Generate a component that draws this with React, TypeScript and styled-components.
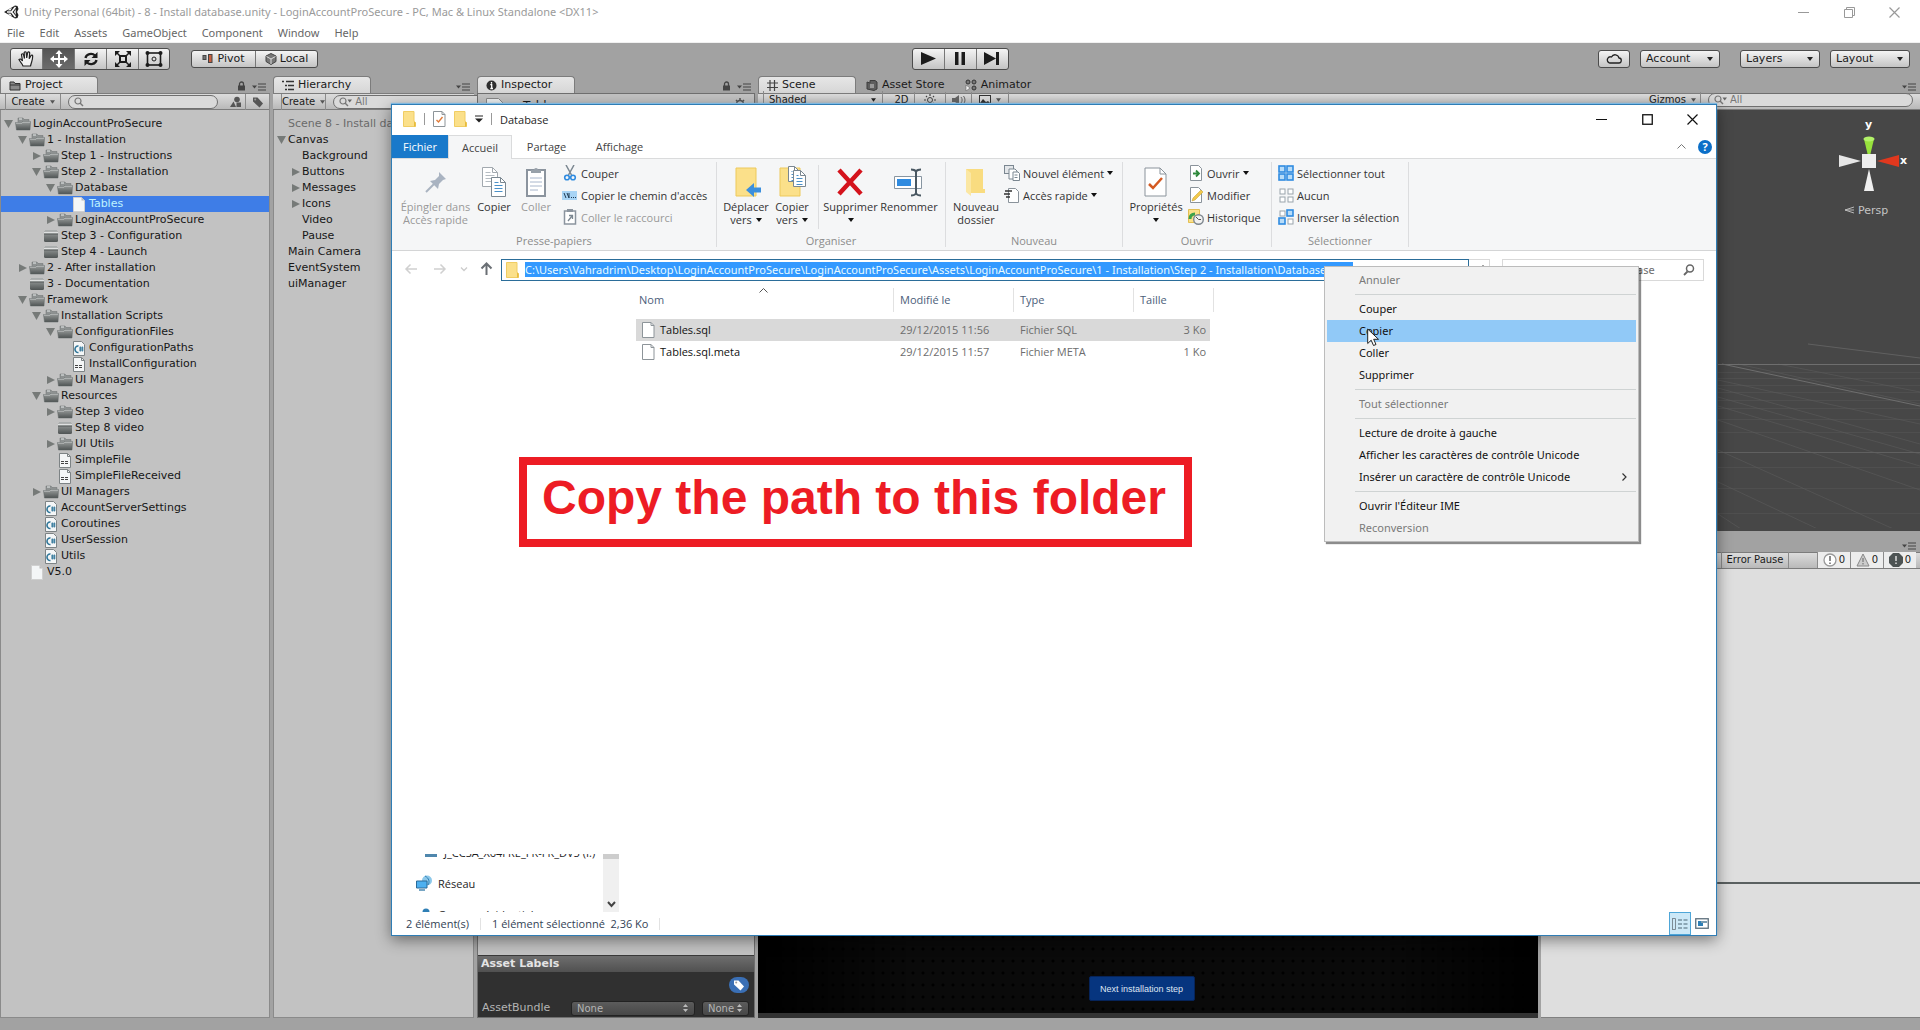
import React from "react";
import styled, { createGlobalStyle, css } from "styled-components";

const unityFont = `"DejaVu Sans", Verdana, sans-serif`;
const winFont = `"Open Sans", "Segoe UI", sans-serif`;
const wideFont = `"Noto Sans", "Segoe UI", sans-serif`;

const GlobalStyle = createGlobalStyle`
  *, *::before, *::after { box-sizing: border-box; }
  body { margin: 0; background: #a2a2a2; }
  button, input, select { font: inherit; color: inherit; margin: 0; }
  ul { list-style: none; margin: 0; padding: 0; }
  svg { display: block; flex: none; }
`;

/* ---------- icons ---------- */

const Caret = ({ size = 6, color = "#222" }: { size?: number; color?: string }) => (
  <svg width={size} height={4} viewBox="0 0 6 4"><path d="M0 0h6L3 4z" fill={color} /></svg>
);

const UnityLogo = () => (
  <svg width="17" height="16" viewBox="0 0 17 16">
    <path d="M1 8 12 1.5l2.5.5L15.500 5 14 8l1.500 3-1 3-2.500.5z" fill="#222" />
    <path d="M4 8h4.500M8.500 8l4-5M8.500 8l4 5" stroke="#fff" strokeWidth="1.600" />
    <path d="M4.500 6.200 9 3.500 7.500 6.500zM4.500 9.800 9 12.500 7.500 9.500zM11 8l1.700-3v6z" fill="#fff" />
  </svg>
);

const LockIcon = () => (
  <svg width="9" height="10" viewBox="0 0 9 10">
    <path d="M2.500 5V3a2 2 0 0 1 4 0v2" fill="none" stroke="#444" strokeWidth="1.300" />
    <rect x="1" y="4.500" width="7" height="5" fill="#444" />
  </svg>
);

const PaneMenuIcon = () => (
  <svg width="14" height="8" viewBox="0 0 14 8">
    <path d="M0 2.500h5L2.500 5.500z" fill="#444" />
    <path d="M6 1h8M6 4h8M6 7h8" stroke="#444" strokeWidth="1.200" />
  </svg>
);

const FolderTabIcon = () => (
  <svg width="12" height="11" viewBox="0 0 12 11">
    <path d="M1 2h4l1 1.500h5V10H1z" fill="#8a8a8a" stroke="#333" />
    <path d="M1 5h10" stroke="#333" />
  </svg>
);

const ListIcon = () => (
  <svg width="12" height="11" viewBox="0 0 12 11">
    <path d="M0 1.500h2M4 1.500h8M3 5.500h2M6 5.500h6M3 9.500h2M6 9.500h6" stroke="#333" strokeWidth="1.400" />
  </svg>
);

const InfoIcon = () => (
  <svg width="11" height="11" viewBox="0 0 11 11">
    <circle cx="5.500" cy="5.500" r="5" fill="#2f2f2f" />
    <path d="M5.500 2v1.700M4.300 4.700h1.400v3.500M4.300 8.500h2.700" stroke="#fff" strokeWidth="1.300" fill="none" />
  </svg>
);

const HashIcon = () => (
  <svg width="11" height="11" viewBox="0 0 11 11">
    <path d="M3 0v11M7.500 0v11M0 3h11M0 7.500h11" stroke="#444" strokeWidth="1.200" />
  </svg>
);

const StoreIcon = () => (
  <svg width="12" height="12" viewBox="0 0 12 12">
    <path d="M1 3l3 1V1.500h5L11 3v7l-3 1.500L1 10z" fill="#5e5e5e" stroke="#3d3d3d" />
    <path d="M4 5h4v4H4z" fill="#999" />
  </svg>
);

const AnimatorIcon = () => (
  <svg width="12" height="12" viewBox="0 0 12 12">
    <g fill="#777" stroke="#333">
      <circle cx="3" cy="3" r="2" /><circle cx="9" cy="3" r="2" /><circle cx="9" cy="9" r="2" />
    </g>
    <path d="M1 6l4 3-4 3z" fill="#eee" stroke="#555" strokeWidth="0.500" />
  </svg>
);

const SearchIcon = ({ caret }: { caret?: boolean }) => (
  <svg width={caret ? 14 : 10} height="10" viewBox={caret ? "0 0 14 10" : "0 0 10 10"}>
    <circle cx="4" cy="4" r="3" fill="none" stroke="#777" strokeWidth="1.200" />
    <path d="M6 6l3 3" stroke="#777" strokeWidth="1.400" />
    {caret && <path d="M8.500 2.500H13L10.700 5.500z" fill="#666" />}
  </svg>
);

const ShapesIcon = () => (
  <svg width="13" height="12" viewBox="0 0 13 12">
    <path d="M1 11l3.500-5.500L7 11z" fill="#555" />
    <circle cx="8" cy="3.500" r="2.800" fill="#555" /><rect x="7.500" y="6.500" width="4.500" height="4.500" fill="#555" />
  </svg>
);

const TagIcon = ({ color = "#555" }: { color?: string }) => (
  <svg width="12" height="12" viewBox="0 0 12 12">
    <path d="M1 1.500h4.500L11 7.500 7.500 11.500 1 5.500z" fill={color} /><circle cx="3.200" cy="3.500" r="1" fill="#9a9a9a" />
  </svg>
);

const FolderIcon = ({ empty }: { empty?: boolean }) => (
  <svg width="16" height="14" viewBox="0 0 16 14">
    <defs>
      <linearGradient id="folderGrad" x1="0" y1="0" x2="0" y2="1">
        <stop offset="0" stopColor="#9b9f9e" /><stop offset="1" stopColor="#4f5454" />
      </linearGradient>
    </defs>
    {empty ? (
      <>
        <path d="M1 2.500h14v9a1.500 1.500 0 0 1-1.500 1.500h-11A1.500 1.500 0 0 1 1 11.500z" fill="url(#folderGrad)" />
        <path d="M2 1.500h12" stroke="#a9adad" /><path d="M1 3.500h14" stroke="#dfe1e1" /><path d="M1 5.500h14" stroke="#6b6f6f" />
      </>
    ) : (
      <>
        <path d="M3 1h5l1 1.500h5V8H3z" fill="#8e9292" stroke="#6a6e6e" strokeWidth="0.500" />
        <path d="M4 2h3" stroke="#e9eded" />
        <path d="M.5 5.500h6l1-1H15.500L15 13H1.500z" fill="url(#folderGrad)" stroke="#5f6464" strokeWidth="0.500" />
        <path d="M1 6.200h6l1-1h7" stroke="#c4c8c8" fill="none" strokeWidth="0.800" />
      </>
    )}
  </svg>
);

const SheetIcon = ({ kind }: { kind: "blank" | "cs" | "text" }) => (
  <svg width="16" height="15" viewBox="0 0 16 15">
    <path d="M2.500 .5h8l3 3v11h-11z" fill="#f4f6f7" stroke={kind === "blank" ? "#d0d0d0" : "#7d8385"} />
    {kind === "cs" && (
      <>
        <path d="M7.500 5a3 3.300 0 1 0 0 6.500" fill="none" stroke="#2e7598" strokeWidth="1.600" />
        <path d="M9.300 5.500v5M11.300 5.500v5M8.200 7h4.300M8.200 9h4.300" stroke="#2e7598" strokeWidth="1" />
      </>
    )}
    {kind === "text" && (
      <>
        <path d="M4 8.500h8M4 10.500h8" stroke="#444" strokeDasharray="3 1" strokeWidth="1.200" />
        <path d="M10.500.5v3h3" fill="none" stroke="#7d8385" />
      </>
    )}
    {kind === "blank" && <path d="M10.500.5v3h3" fill="#bbb" />}
  </svg>
);

const Triangle = ({ open }: { open: boolean }) => (
  <svg width="10" height="10" viewBox="0 0 10 10">
    <path d={open ? "M0 1h9L4.500 9z" : "M1 1l8 4-8 4z"} fill="#767a78" />
  </svg>
);

const YellowFolder = ({ w = 13, h = 16 }: { w?: number; h?: number }) => (
  <svg width={w} height={h} viewBox="0 0 13 16">
    <path d="M.5.5h10.500v10l1.500 1V15.500H.5z" fill="#fbe08a" stroke="#f0cd63" />
    <path d="M11 10.500v5h1.500v-4z" fill="#e8bc3c" />
  </svg>
);

const Doc = ({ x, y, w, h, c = "#7a8791", lines = "#4a90c8" }: { x: number; y: number; w: number; h: number; c?: string; lines?: string }) => (
  <g>
    <path d={`M${x} ${y}h${w - 5}l5 5v${h - 5}h-${w}z`} fill="#fff" stroke={c} />
    <path d={`M${x + w - 5} ${y}v5h5`} fill="none" stroke={c} />
    <path d={`M${x + 3} ${y + 8}h${w - 6}M${x + 3} ${y + 11}h${w - 6}M${x + 3} ${y + 14}h${w - 6}M${x + 3} ${y + 5}h${w - 10}`} stroke={lines} />
  </g>
);

const PinIcon = () => (
  <svg width="32" height="32" viewBox="0 0 32 32">
    <path d="M19 6l7 7-3 1-4 4-1 5-8-8 5-1 4-4z" fill="#a9b3c1" />
    <path d="M14 18l-8 8" stroke="#a9b3c1" strokeWidth="2" />
  </svg>
);
const CopyIcon = () => (
  <svg width="32" height="32" viewBox="0 0 32 32">
    <Doc x={4.5} y={1.5} w={15} h={19} c="#a2a9af" lines="#b5bcc2" /><Doc x={13.5} y={11.5} w={14} h={19} />
  </svg>
);
const PasteIcon = () => (
  <svg width="32" height="32" viewBox="0 0 32 32">
    <rect x="7" y="4" width="18" height="26" fill="#fff" stroke="#8b949e" strokeWidth="2" />
    <path d="M11 7V4h3a2 2 0 0 1 4 0h3v3z" fill="#98a1aa" />
    <path d="M10 12h12M10 16h12M10 20h12M10 24h8" stroke="#a8b6cc" />
  </svg>
);
const MoveToIcon = () => (
  <svg width="32" height="32" viewBox="0 0 32 32">
    <path d="M6 2h20v28H6z" fill="#fbe08a" stroke="#edc95a" />
    <path d="M16 24l8-7v4.500h7v5h-7V31z" fill="#3b8fdd" />
  </svg>
);
const CopyToIcon = () => (
  <svg width="32" height="32" viewBox="0 0 32 32">
    <path d="M4 2h20v28H4z" fill="#fbe08a" stroke="#edc95a" />
    <Doc x={12.5} y={.5} w={11} h={15} /><Doc x={17.5} y={4.5} w={12} h={16} />
  </svg>
);
const DeleteIcon = () => (
  <svg width="32" height="32" viewBox="0 0 32 32">
    <path d="M4 4l22 24M26 4L4 28" stroke="#d4131c" strokeWidth="4.500" />
  </svg>
);
const RenameIcon = () => (
  <svg width="32" height="32" viewBox="0 0 32 32">
    <path d="M1.500 10.500h27v12h-27z" fill="#fff" stroke="#8795a1" />
    <rect x="4" y="13" width="14" height="7" fill="#2f8be0" />
    <path d="M18 3.500c3 0 4 .5 5 2 1-1.500 2-2 5-2M18 29.500c3 0 4-.5 5-2 1 1.500 2 2 5 2M23 5v23" fill="none" stroke="#4a5862" strokeWidth="2" />
  </svg>
);
const NewFolderIcon = () => (
  <svg width="32" height="32" viewBox="0 0 32 32">
    <path d="M6 3h17v20h2v4H11l-3-3z" fill="#f9dc80" /><path d="M6 3l5 4v23l-5-4z" fill="#fbe7a3" />
  </svg>
);
const PropertiesIcon = () => (
  <svg width="32" height="32" viewBox="0 0 32 32">
    <path d="M5 2h15l6 6v22H5z" fill="#fff" stroke="#8a939b" /><path d="M20 2v6h6" fill="none" stroke="#8a939b" />
    <path d="M9 18l4 4 9-10" fill="none" stroke="#d45a22" strokeWidth="2.500" />
  </svg>
);

const ScissorsIcon = () => (
  <svg width="16" height="16" viewBox="0 0 16 16">
    <path d="M4 0l5.500 10M12 0L6.500 10" stroke="#7b8791" strokeWidth="1.500" />
    <circle cx="5" cy="12.500" r="2.300" fill="none" stroke="#2f8be0" strokeWidth="1.600" />
    <circle cx="11" cy="12.500" r="2.300" fill="none" stroke="#2f8be0" strokeWidth="1.600" />
  </svg>
);
const PathIcon = () => (
  <svg width="16" height="16" viewBox="0 0 16 16">
    <rect x="0" y="4" width="15" height="9" fill="#a8d4f5" />
    <path d="M2 6l2 5M5 6l2 5M7 6v5" stroke="#1f3a52" /><path d="M9 10.500h5" stroke="#1f3a52" strokeDasharray="1 1" />
  </svg>
);
const ShortcutIcon = () => (
  <svg width="16" height="16" viewBox="0 0 16 16">
    <rect x="2.500" y="2" width="11" height="13" fill="#fff" stroke="#8b949e" strokeWidth="1.500" />
    <rect x="5" y="0" width="6" height="3" fill="#8b949e" /><path d="M6 12l4-5M7 6.500h3.500V10" fill="none" stroke="#7b8791" strokeWidth="1.300" />
  </svg>
);
const NewItemIcon = () => (
  <svg width="16" height="16" viewBox="0 0 16 16">
    <rect x=".5" y=".5" width="9" height="8" fill="#e4e7ea" stroke="#7b8791" /><path d="M5 4h6l2 2v8H5z" fill="#fff" stroke="#7b8791" />
    <path d="M9 7h5l1.500 1.500v7H9z" fill="#fff" stroke="#7b8791" /><path d="M10.500 10h3M10.500 12.500h3" stroke="#7b8791" />
  </svg>
);
const QuickIcon = () => (
  <svg width="16" height="16" viewBox="0 0 16 16">
    <path d="M4.500 1.500h7l3 3v11h-10z" fill="#fff" stroke="#8a939b" /><path d="M1 4h7M0 7h6M2 10h4" stroke="#333" strokeWidth="1.300" />
  </svg>
);
const OpenIcon = () => (
  <svg width="16" height="16" viewBox="0 0 16 16">
    <path d="M2.500.5h8l3 3v12h-11z" fill="#fff" stroke="#8a939b" /><path d="M5 8.500h5M8 5.500l3 3-3 3" fill="none" stroke="#2f8a3c" strokeWidth="1.800" />
  </svg>
);
const EditIcon = () => (
  <svg width="16" height="16" viewBox="0 0 16 16">
    <path d="M2.500.5h8l3 3v12h-11z" fill="#fff" stroke="#8a939b" /><path d="M4 14l1-3 8-8 2 2-8 8z" fill="#f2c94b" stroke="#c39a2b" strokeWidth="0.500" />
  </svg>
);
const HistoryIcon = () => (
  <svg width="16" height="16" viewBox="0 0 16 16">
    <path d="M.5.5h11v13H.5z" fill="#fbe08a" stroke="#e3bf52" /><path d="M2 10c0-4 2-5 5-5" fill="none" stroke="#3da24a" strokeWidth="3" />
    <circle cx="10.500" cy="10.500" r="4.800" fill="#f1f1f1" stroke="#7d868e" strokeWidth="1.400" /><path d="M8 8l2.500 2.500H13" stroke="#555" fill="none" />
  </svg>
);
const Squares = ({ on }: { on: boolean[] }) => (
  <svg width="16" height="16" viewBox="0 0 16 16">
    {on.map((o, i) => (
      <rect key={i} x={(i % 2) * 8 + (o ? 1 : 2)} y={Math.floor(i / 2) * 8 + (o ? 1 : 2)} width={o ? 6 : 5} height={o ? 6 : 5}
        fill={o ? "#b8dcf8" : "#fff"} stroke={o ? "#2f8be0" : "#9aa4ac"} strokeWidth={o ? 1.6 : 1} />
    ))}
  </svg>
);

/* ---------- editor chrome ---------- */

const Page = styled.div`
  position: relative;
  display: flex;
  flex-direction: column;
  min-height: 100vh;
  overflow: hidden;
  background: #a2a2a2;
  font: 11px/16px ${unityFont};
  color: #1a1a1a;
`;

const TitleBar = styled.header`
  display: flex;
  align-items: center;
  gap: 4px;
  height: 24px;
  padding: 0 20px 0 3px;
  background: #fff;
  color: #9a9a9a;
  font: 11px/16px ${wideFont};
`;

const TitleText = styled.span` flex: 1; `;

const WindowButtons = styled.div`
  display: flex;
  align-items: center;
  gap: 34px;
`;

const BareButton = styled.button`
  display: flex;
  align-items: center;
  justify-content: center;
  padding: 0;
  border: 0;
  background: none;
`;

const MenuBar = styled.nav`
  display: flex;
  align-items: center;
  gap: 15px;
  height: 19px;
  padding: 0 7px;
  background: #fff;
  border-bottom: 1px solid #f0f0f0;
  color: #666;
  font: 11px/16px ${wideFont};
`;

const Toolbar = styled.div`
  display: grid;
  grid-template-columns: 1fr auto 1fr;
  align-items: center;
  height: 33px;
  padding: 0 10px 2px;
`;

const ToolbarSide = styled.div<{ $end?: boolean }>`
  display: flex;
  align-items: center;
  justify-content: ${(p) => (p.$end ? "flex-end" : "flex-start")};
`;

const raised = css`
  border: 1px solid #4c4c4c;
  border-radius: 3px;
  background: linear-gradient(#f4f4f4, #c4c4c4);
`;

const Segmented = styled.div<{ $h: number; $ml?: number }>`
  ${raised}
  display: flex;
  height: ${(p) => p.$h}px;
  margin-left: ${(p) => p.$ml ?? 0}px;
  overflow: hidden;
`;

const Segment = styled.button<{ $w: number; $on?: boolean }>`
  display: flex;
  align-items: center;
  justify-content: center;
  gap: 3px;
  width: ${(p) => p.$w}px;
  padding: 0;
  border: 0;
  background: ${(p) => (p.$on ? "linear-gradient(#555, #6c6c6c)" : "none")};
  & + & { border-left: 1px solid #777; }
`;

const CloudButton = styled.button`
  ${raised}
  display: flex;
  align-items: center;
  justify-content: center;
  width: 32px;
  height: 18px;
  padding: 0;
`;

const SelectBox = styled.span<{ $w: number; $ml?: number; $look?: "raised" | "flat" | "dark" }>`
  display: grid;
  align-items: center;
  width: ${(p) => p.$w}px;
  margin-left: ${(p) => p.$ml ?? 0}px;
  ${(p) => p.$look !== "flat" && p.$look !== "dark" && css`${raised} height: 18px;`}
  ${(p) => p.$look === "flat" && css`height: 17px; border: solid #8b8b8b; border-width: 0 1px; font-size: 10px;`}
  ${(p) => p.$look === "dark" && css`
    height: 15px; border: 1px solid #222; border-radius: 3px; font-size: 10px; color: #b4b4b4;
    background: linear-gradient(#5c5c5c, #474747);
  `}
  > * { grid-area: 1 / 1; }
  > svg { justify-self: end; margin-right: 6px; pointer-events: none; }
`;

const Select = styled.select`
  width: 100%;
  padding: 0 5px;
  border: 0;
  background: none;
  appearance: none;
  line-height: 13px;
`;

const UpDown = () => (
  <svg width="5" height="8" viewBox="0 0 5 8"><path d="M0 3h5L2.500 0zM0 5h5L2.500 8z" fill="#bbb" /></svg>
);

const Picker = ({ label, w, ml, look }: { label: string; w: number; ml?: number; look?: "raised" | "flat" | "dark" }) => (
  <SelectBox $w={w} $ml={ml} $look={look}>
    <Select aria-label={label}><option>{label}</option></Select>
    {look === "dark" ? <UpDown /> : <Caret size={look === "flat" ? 5 : 6} />}
  </SelectBox>
);

const Dock = styled.main`
  flex: 1;
  display: grid;
  grid-template-columns: 270px 201px 278px minmax(0, 1fr);
  gap: 3px;
  min-height: 0;
`;

const Panel = styled.section`
  display: flex;
  flex-direction: column;
  min-width: 0;
  min-height: 0;
`;

const TabStrip = styled.div`
  display: flex;
  align-items: flex-end;
  height: 17px;
  padding-right: 4px;
`;

const Tab = styled.button<{ $active?: boolean }>`
  display: flex;
  align-items: center;
  gap: 4px;
  height: 17px;
  padding: 0 10px;
  border: 0;
  border-radius: 4px 4px 0 0;
  background: none;
  line-height: 16px;
  ${(p) => p.$active && css`
    width: 98px;
    padding: 0 8px;
    border: solid #7c7c7c;
    border-width: 1px 1px 0;
    background: linear-gradient(#e6e6e6, #d6d6d6);
  `}
`;

const TabExtras = styled.div`
  display: flex;
  align-items: flex-end;
  align-self: flex-end;
  gap: 6px;
  margin-left: auto;
  padding-bottom: 2px;
`;

const PanelToolbar = styled.div<{ $pl?: number }>`
  display: flex;
  align-items: center;
  height: 17px;
  padding-left: ${(p) => p.$pl ?? 5}px;
  border: solid #7c7c7c;
  border-width: 1px 0;
  background: linear-gradient(#dcdcdc, #b9b9b9);
  font-size: 10px;
`;

const SceneTools = styled(PanelToolbar)` padding-bottom: 4px; `;

const FlatButton = styled.button<{ $w: number }>`
  display: flex;
  align-items: center;
  justify-content: center;
  gap: 5px;
  width: ${(p) => p.$w}px;
  height: 16px;
  padding: 0;
  border: solid #8b8b8b;
  border-width: 0 1px 0 0;
  background: none;
  &:first-child { border-left-width: 1px; }
`;

const Spacer = styled.span<{ $w?: number }>` flex: ${(p) => (p.$w ? `0 0 ${p.$w}px` : "1")}; `;

const SearchField = styled.label<{ $w?: number }>`
  display: flex;
  flex: ${(p) => (p.$w ? `0 0 ${p.$w}px` : "1")};
  align-items: center;
  gap: 2px;
  height: 14px;
  margin: 0 7px;
  padding: 0 5px;
  border: 1px solid #6f6f6f;
  border-radius: 7px;
  background: #dadada;
  color: #777;
`;

const SearchInput = styled.input`
  flex: 1;
  min-width: 0;
  padding: 0;
  border: 0;
  background: none;
  line-height: 12px;
  &::placeholder { color: #777; opacity: 1; }
`;

const PanelBody = styled.div`
  flex: 1;
  min-height: 0;
  padding-top: 6px;
  overflow: hidden;
  background: #c2c2c2;
  border: 1px solid #8a8a8a;
  border-top: 0;
`;

const TreeRow = styled.li<{ $depth: number; $selected?: boolean; $dim?: boolean }>`
  display: flex;
  align-items: center;
  height: 16px;
  padding-left: ${(p) => 3 + p.$depth * 14}px;
  white-space: nowrap;
  color: ${(p) => (p.$selected ? "#bff3ff" : p.$dim ? "#6a6a6a" : "#161616")};
  background: ${(p) => (p.$selected ? "#3e7de7" : "none")};
`;

const ArrowSlot = styled.span` width: 11px; flex: none; `;
const IconSlot = styled.span` width: 18px; flex: none; `;

type Kind = "folder" | "empty" | "blank" | "cs" | "text";
const project: [number, string, Kind, boolean?][] = [
  [0, "LoginAccountProSecure", "folder", true],
  [1, "1 - Installation", "folder", true],
  [2, "Step 1 - Instructions", "folder", false],
  [2, "Step 2 - Installation", "folder", true],
  [3, "Database", "folder", true],
  [4, "Tables", "blank"],
  [3, "LoginAccountProSecure", "folder", false],
  [2, "Step 3 - Configuration", "empty"],
  [2, "Step 4 - Launch", "empty"],
  [1, "2 - After installation", "folder", false],
  [1, "3 - Documentation", "empty"],
  [1, "Framework", "folder", true],
  [2, "Installation Scripts", "folder", true],
  [3, "ConfigurationFiles", "folder", true],
  [4, "ConfigurationPaths", "cs"],
  [4, "InstallConfiguration", "text"],
  [3, "UI Managers", "folder", false],
  [2, "Resources", "folder", true],
  [3, "Step 3 video", "folder", false],
  [3, "Step 8 video", "empty"],
  [3, "UI Utils", "folder", false],
  [3, "SimpleFile", "text"],
  [3, "SimpleFileReceived", "text"],
  [2, "UI Managers", "folder", false],
  [2, "AccountServerSettings", "cs"],
  [2, "Coroutines", "cs"],
  [2, "UserSession", "cs"],
  [2, "Utils", "cs"],
  [1, "V5.0", "blank"],
];

const hierarchy: [number, string, boolean?][] = [
  [0, "Scene 8 - Install database"],
  [0, "Canvas", true],
  [1, "Background"],
  [1, "Buttons", false],
  [1, "Messages", false],
  [1, "Icons", false],
  [1, "Video"],
  [1, "Pause"],
  [0, "Main Camera"],
  [0, "EventSystem"],
  [0, "uiManager"],
];

const InspectorHead = styled.div`
  display: flex;
  align-items: flex-start;
  justify-content: space-between;
  padding: 0 8px;
  font-size: 12px;
`;
const InspectorTitle = styled.span` display: flex; gap: 19px; `;

const InspectorBody = styled.div`
  flex: 1;
  display: flex;
  flex-direction: column;
  justify-content: space-between;
  padding-top: 4px;
  background: #c2c2c2;
  border: 1px solid #6f6f6f;
`;

const AssetLabels = styled.div` background: #303030; color: #b4b4b4; `;
const AssetHeader = styled.h2`
  margin: 0;
  height: 17px;
  padding: 0 3px;
  border-top: 1px solid #3a3a3a;
  background: linear-gradient(#6e6e6e, #505050);
  color: #e4e4e4;
  font-size: 11px;
  line-height: 16px;
`;
const TagRow = styled.div` display: flex; justify-content: flex-end; padding: 5px 5px 7px; `;
const TagButton = styled.button`
  display: flex;
  align-items: center;
  justify-content: center;
  width: 20px;
  height: 16px;
  padding: 0;
  border: 0;
  border-radius: 8px;
  background: #3a6fb5;
`;
const BundleRow = styled.div`
  display: flex;
  align-items: center;
  height: 17px;
  padding: 0 5px 1px 4px;
`;
const BundleLabel = styled.span` flex: 1; `;

const SceneStack = styled.div`
  display: grid;
  grid-template-rows: minmax(0, 455fr) minmax(0, 484fr);
  gap: 4px;
  min-width: 0;
`;

const SceneView = styled.div`
  flex: 1;
  display: flex;
  justify-content: flex-end;
  min-height: 0;
  overflow: hidden;
  background: #474747;
`;

const LowerDock = styled.div`
  display: grid;
  grid-template-columns: minmax(0, 780fr) minmax(0, 379fr);
  gap: 3px;
  min-height: 0;
`;

const GameView = styled.div`
  display: flex;
  flex-direction: column;
  justify-content: flex-end;
  align-items: center;
  padding: 0 13px 12px 0;
  border-bottom: 5px solid #333;
  background:
    linear-gradient(90deg, #000, transparent 20%, transparent 80%, #000),
    radial-gradient(circle, #000 1px, transparent 2px) 0 0 / 10px 12px,
    #0a0a0a;
`;

const NextButton = styled.button`
  width: 106px;
  height: 25px;
  padding: 0;
  border: 1px solid #06245a;
  border-radius: 2px;
  background: #06357f;
  color: #dfe6f2;
  font: 9px/12px "Liberation Sans", Arial, sans-serif;
`;

const ConsoleTools = styled(PanelToolbar)` justify-content: flex-end; padding-right: 4px; `;
const Counter = styled.button`
  display: flex;
  align-items: center;
  justify-content: center;
  gap: 2px;
  width: 33px;
  height: 16px;
  padding: 0;
  border: solid #8b8b8b;
  border-width: 0 0 0 1px;
  background: #ededed;
`;
const ConsoleList = styled.div` flex: 315; background: #dedede; border-bottom: 2px solid #5a6060; `;
const ConsoleDetail = styled.div` flex: 133; background: #dedede; border-bottom: 1px solid #808080; `;

const StatusStrip = styled.footer` height: 12px; `;

/* ---------- explorer window ---------- */

const Explorer = styled.section`
  position: absolute;
  top: 104px;
  right: 203px;
  bottom: 94px;
  left: 391px;
  display: flex;
  flex-direction: column;
  border: 1px solid #2f7db5;
  background: #fff;
  box-shadow: 0 -1px 1px #7fb8e0, 0 4px 14px rgba(0, 0, 0, 0.45);
  color: #1e1e1e;
  font: 11px/13px ${winFont};
`;

const ExplorerTitle = styled.div`
  display: flex;
  align-items: center;
  gap: 8px;
  height: 30px;
  padding: 0 18px 2px 11px;
`;
const Bar = styled.span<{ $h: number; $c?: string }>`
  width: 1px;
  height: ${(p) => p.$h}px;
  background: ${(p) => p.$c ?? "#999"};
`;

const RibbonTabs = styled.div`
  display: flex;
  align-items: stretch;
  height: 24px;
  padding-right: 4px;
  border-bottom: 1px solid #dadbdc;
`;
const RibbonTab = styled.button<{ $look?: "file" | "on"; $w: number }>`
  width: ${(p) => p.$w}px;
  padding: 0;
  border: 0;
  background: none;
  color: #444;
  ${(p) => p.$look === "file" && css`background: #1979ca; color: #fff;`}
  ${(p) => p.$look === "on" && css`
    margin-bottom: -1px; border: 1px solid #dadbdc; border-bottom: 0; background: #f5f6f7;
  `}
`;
const TabsEnd = styled.div` display: flex; align-items: center; gap: 12px; margin-left: auto; `;
const Help = styled.button`
  width: 14px;
  height: 14px;
  padding: 0;
  border: 0;
  border-radius: 7px;
  background: #0b6fc8;
  color: #fff;
  font-weight: 700;
  line-height: 14px;
`;

const Ribbon = styled.div`
  display: flex;
  height: 92px;
  padding: 3px 0;
  background: #f5f6f7;
  border-bottom: 1px solid #d4d5d6;
`;
const Group = styled.div<{ $w: number }>`
  display: flex;
  flex-direction: column;
  justify-content: space-between;
  width: ${(p) => p.$w}px;
  border-right: 1px solid #dcdddf;
`;
const GroupRow = styled.div` display: flex; padding: 0 0 0 6px; `;
const GroupLabel = styled.div` text-align: center; color: #8c8c8c; line-height: 12px; `;
const BigButton = styled.button<{ $w: number; $off?: boolean }>`
  display: flex;
  flex-direction: column;
  align-items: center;
  gap: 2px;
  width: ${(p) => p.$w}px;
  height: 66px;
  padding: 4px 0 0;
  border: 0;
  background: none;
  color: ${(p) => (p.$off ? "#999" : "#333")};
  line-height: 13px;
  white-space: nowrap;
`;
const BigText = styled.span` display: flex; flex-direction: column; align-items: center; `;
const CaretLine = styled.span` display: flex; align-items: center; gap: 4px; height: 13px; `;
const SmallList = styled.div<{ $ml?: number }>`
  display: flex;
  flex-direction: column;
  margin-left: ${(p) => p.$ml ?? 6}px;
`;
const SmallButton = styled.button<{ $off?: boolean }>`
  display: flex;
  align-items: center;
  gap: 3px;
  height: 22px;
  padding: 0;
  border: 0;
  background: none;
  color: ${(p) => (p.$off ? "#999" : "#333")};
  white-space: nowrap;
`;
const InnerSep = styled.span` width: 1px; height: 64px; margin: 3px 3px 0; background: #dcdddf; `;

const AddressRow = styled.div`
  display: flex;
  align-items: center;
  height: 37px;
  padding: 0 12px 0 12px;
`;
const NavArrows = styled.div` display: flex; align-items: center; gap: 8px; width: 97px; flex: none; padding-bottom: 2px; `;
const AddressBox = styled.label`
  display: flex;
  flex: 1;
  align-items: center;
  gap: 6px;
  height: 22px;
  padding: 0 4px;
  border: 1px solid #2b6d99;
`;
const PathInput = styled.input`
  width: 828px;
  max-width: 100%;
  height: 15px;
  padding: 0;
  border: 0;
  background: #3399ff;
  color: #e8fbff;
  font-family: ${wideFont};
  line-height: 15px;
`;
const RefreshButton = styled(BareButton)`
  width: 21px;
  height: 22px;
  border: 1px solid #d9d9d9;
  border-left: 0;
`;
const FindBox = styled.label`
  display: flex;
  align-items: center;
  width: 202px;
  height: 22px;
  margin-left: 12px;
  padding: 0 8px;
  border: 1px solid #d9d9d9;
`;
const FindInput = styled.input`
  flex: 1;
  min-width: 0;
  padding: 0;
  border: 0;
  background: none;
  font-family: ${wideFont};
  &::placeholder { color: #6d6d6d; opacity: 1; }
`;

const Files = styled.div`
  flex: 1;
  padding-left: 244px;
`;
const FileTable = styled.table`
  width: 578px;
  table-layout: fixed;
  border-collapse: collapse;
  color: #6d6d6d;
  line-height: 16px;
`;
const HeadCell = styled.th<{ $w: number }>`
  width: ${(p) => p.$w}px;
  height: 31px;
  padding: 0 0 7px 3px;
  font-weight: 400;
  text-align: left;
  color: #4c607a;
  & > span { display: flex; align-items: center; height: 24px; padding-left: 3px; border-right: 1px solid #e2e2e2; }
  &:first-child > span { padding-left: 0; }
`;
const SortMark = styled.span` align-self: flex-start; margin-left: 95px; `;
const FileRow = styled.tr<{ $on?: boolean }>`
  height: 22px;
  background: ${(p) => (p.$on ? "linear-gradient(90deg, #d9d9d9 574px, #fff 574px)" : "none")};
`;
const Cell = styled.td<{ $right?: boolean }>`
  padding: 0 ${(p) => (p.$right ? 8 : 0)}px 0 6px;
  text-align: ${(p) => (p.$right ? "right" : "left")};
`;
const FileName = styled.span` display: flex; align-items: center; gap: 5px; color: #111; `;

const NavPane = styled.div`
  display: flex;
  height: 58px;
  width: 226px;
  margin-left: 1px;
`;
const NavRows = styled.ul`
  flex: 1;
  display: flex;
  flex-direction: column;
  justify-content: center;
  overflow: hidden;
`;
const NavRow = styled.li<{ $in?: boolean }>`
  display: flex;
  flex: none;
  align-items: center;
  gap: 6px;
  height: 31px;
  padding-left: ${(p) => (p.$in ? 31 : 23)}px;
  white-space: nowrap;
`;
const ScrollTrack = styled.div`
  display: flex;
  flex-direction: column;
  align-items: center;
  justify-content: space-between;
  width: 16px;
  padding-bottom: 4px;
  background: #f0f0f0;
`;
const ScrollThumb = styled.span` width: 16px; height: 5px; background: #cdcdcd; `;

const ExplorerStatus = styled.div`
  display: flex;
  align-items: center;
  gap: 11px;
  height: 23px;
  padding: 0 3px 0 14px;
  color: #333f55;
`;
const ViewButton = styled.button<{ $on?: boolean }>`
  display: flex;
  align-items: center;
  justify-content: center;
  width: 22px;
  height: 23px;
  padding: 0;
  border: 1px solid ${(p) => (p.$on ? "#4ea6d8" : "transparent")};
  background: ${(p) => (p.$on ? "#cce8f7" : "none")};
`;
const ViewButtons = styled.div` display: flex; margin-left: auto; `;

/* ---------- overlays ---------- */

const Callout = styled.p`
  position: absolute;
  top: 457px;
  left: 519px;
  width: 673px;
  height: 90px;
  margin: 0;
  padding: 5px 0 0 15px;
  border: 8px solid #ed1c24;
  background: #fff;
  color: #ed1c24;
  font: 700 48px/56px "Liberation Sans", Arial, sans-serif;
  white-space: nowrap;
`;

const ContextMenu = styled.div`
  position: absolute;
  top: 266px;
  left: 1324px;
  width: 315px;
  padding: 2px;
  border: 1px solid #bcbcbc;
  background: #f1f1f1;
  box-shadow: 2px 2px 1px rgba(0, 0, 0, 0.45);
  font: 11px/16px ${wideFont};
`;
const MenuItem = styled.button<{ $on?: boolean }>`
  display: flex;
  align-items: center;
  justify-content: space-between;
  width: 100%;
  height: 22px;
  padding: 0 9px 0 32px;
  border: 0;
  background: ${(p) => (p.$on ? "#91c9f7" : "none")};
  color: #111;
  &:disabled { color: #7a7a7a; }
`;
const MenuRule = styled.hr`
  height: 1px;
  margin: 3px 0 3px 28px;
  border: 0;
  background: #cfd3d3;
`;
const Cursor = styled.svg`
  position: absolute;
  top: 328px;
  left: 1367px;
`;

const BigItem = ({ icon, w, lines, off, caret }: { icon: React.ReactNode; w: number; lines: string[]; off?: boolean; caret?: boolean }) => (
  <BigButton $w={w} $off={off}>
    {icon}
    <BigText>
      {lines.map((l, i) => (
        <CaretLine key={i}>
          {l}
          {caret && i === lines.length - 1 && <Caret color="#111" />}
        </CaretLine>
      ))}
    </BigText>
  </BigButton>
);

const SmallItem = ({ icon, text, off, caret }: { icon: React.ReactNode; text: string; off?: boolean; caret?: boolean }) => (
  <SmallButton $off={off}>{icon}{text}{caret && <Caret color="#111" />}</SmallButton>
);

const PageIcon = ({ check }: { check?: boolean }) => (
  <svg width="13" height="16" viewBox="0 0 13 16">
    <path d="M.5.5h8.500l3 3v12H.5z" fill="#fff" stroke="#8d9499" /><path d="M9 .5v3h3" fill="none" stroke="#8d9499" />
    {check && <path d="M3.500 9l2 2 4-5" fill="none" stroke="#e07b39" strokeWidth="1.400" />}
  </svg>
);

const WinMin = ({ c }: { c: string }) => <svg width="12" height="12"><path d="M0 6.500h11" stroke={c} /></svg>;
const WinClose = ({ c }: { c: string }) => <svg width="11" height="11"><path d="M.5.5l10 10M10.500.5l-10 10" stroke={c} strokeWidth="1.200" /></svg>;

const ExplorerWindow = () => (
  <Explorer aria-label="Database">
    <ExplorerTitle>
      <YellowFolder />
      <Bar $h={12} />
      <PageIcon check />
      <YellowFolder />
      <svg width="8" height="8" viewBox="0 0 8 8"><path d="M0 1h8" stroke="#222" /><path d="M0 3.500h8L4 7.500z" fill="#222" /></svg>
      <Bar $h={12} />
      <TitleText>Database</TitleText>
      <WindowButtons>
        <BareButton aria-label="Réduire"><WinMin c="#111" /></BareButton>
        <BareButton aria-label="Agrandir"><svg width="11" height="11"><rect x=".75" y=".75" width="9.500" height="9.500" fill="none" stroke="#111" strokeWidth="1.300" /></svg></BareButton>
        <BareButton aria-label="Fermer"><WinClose c="#111" /></BareButton>
      </WindowButtons>
    </ExplorerTitle>
    <RibbonTabs>
      <RibbonTab $look="file" $w={56}>Fichier</RibbonTab>
      <RibbonTab $look="on" $w={64}>Accueil</RibbonTab>
      <RibbonTab $w={69}>Partage</RibbonTab>
      <RibbonTab $w={77}>Affichage</RibbonTab>
      <TabsEnd>
        <svg width="9" height="5"><path d="M.5 4.500l4-4 4 4" fill="none" stroke="#777" /></svg>
        <Help>?</Help>
      </TabsEnd>
    </RibbonTabs>
    <Ribbon>
      <Group $w={325}>
        <GroupRow>
          <BigItem icon={<PinIcon />} w={75} lines={["Épingler dans", "Accès rapide"]} off />
          <BigItem icon={<CopyIcon />} w={42} lines={["Copier"]} />
          <BigItem icon={<PasteIcon />} w={42} lines={["Coller"]} off />
          <SmallList $ml={5}>
            <SmallItem icon={<ScissorsIcon />} text="Couper" />
            <SmallItem icon={<PathIcon />} text="Copier le chemin d'accès" />
            <SmallItem icon={<ShortcutIcon />} text="Coller le raccourci" off />
          </SmallList>
        </GroupRow>
        <GroupLabel>Presse-papiers</GroupLabel>
      </Group>
      <Group $w={229}>
        <GroupRow>
          <BigItem icon={<MoveToIcon />} w={46} lines={["Déplacer", "vers"]} caret />
          <BigItem icon={<CopyToIcon />} w={46} lines={["Copier", "vers"]} caret />
          <InnerSep />
          <BigItem icon={<DeleteIcon />} w={57} lines={["Supprimer", ""]} caret />
          <BigItem icon={<RenameIcon />} w={60} lines={["Renommer"]} />
        </GroupRow>
        <GroupLabel>Organiser</GroupLabel>
      </Group>
      <Group $w={177}>
        <GroupRow>
          <BigItem icon={<NewFolderIcon />} w={48} lines={["Nouveau", "dossier"]} />
          <SmallList $ml={4}>
            <SmallItem icon={<NewItemIcon />} text="Nouvel élément" caret />
            <SmallItem icon={<QuickIcon />} text="Accès rapide" caret />
          </SmallList>
        </GroupRow>
        <GroupLabel>Nouveau</GroupLabel>
      </Group>
      <Group $w={149}>
        <GroupRow>
          <BigItem icon={<PropertiesIcon />} w={54} lines={["Propriétés", ""]} caret />
          <SmallList $ml={5}>
            <SmallItem icon={<OpenIcon />} text="Ouvrir" caret />
            <SmallItem icon={<EditIcon />} text="Modifier" />
            <SmallItem icon={<HistoryIcon />} text="Historique" />
          </SmallList>
        </GroupRow>
        <GroupLabel>Ouvrir</GroupLabel>
      </Group>
      <Group $w={137}>
        <GroupRow>
          <SmallList $ml={0}>
            <SmallItem icon={<Squares on={[true, true, true, true]} />} text="Sélectionner tout" />
            <SmallItem icon={<Squares on={[false, false, false, false]} />} text="Aucun" />
            <SmallItem icon={<Squares on={[false, true, true, false]} />} text="Inverser la sélection" />
          </SmallList>
        </GroupRow>
        <GroupLabel>Sélectionner</GroupLabel>
      </Group>
    </Ribbon>
    <AddressRow>
      <NavArrows>
        <svg width="14" height="12"><path d="M13 6H2M6.500 1.500L2 6l4.500 4.500" fill="none" stroke="#d0d0d0" strokeWidth="1.500" /></svg>
        <span />
        <svg width="14" height="12"><path d="M0 6h11M6.500 1.500L11 6l-4.500 4.500" fill="none" stroke="#d0d0d0" strokeWidth="1.500" /></svg>
        <svg width="16" height="6"><path d="M5 1.500l3 3 3-3" fill="none" stroke="#ccc" strokeWidth="1.300" /></svg>
        <svg width="13" height="14"><path d="M6.500 13V2M1.500 6.500l5-5 5 5" fill="none" stroke="#6a6f74" strokeWidth="2" /></svg>
      </NavArrows>
      <AddressBox>
        <YellowFolder />
        <PathInput
          aria-label="Adresse"
          defaultValue="C:\Users\Vahradrim\Desktop\LoginAccountProSecure\LoginAccountProSecure\Assets\LoginAccountProSecure\1 - Installation\Step 2 - Installation\Database"
        />
      </AddressBox>
      <RefreshButton aria-label="Actualiser">
        <svg width="10" height="10"><path d="M8.500 3.500A4 4 0 1 0 9 6M9 0v4H5" fill="none" stroke="#666" strokeWidth="1.200" /></svg>
      </RefreshButton>
      <FindBox>
        <FindInput placeholder="Rechercher dans : Database" aria-label="Rechercher" />
        <svg width="12" height="12"><circle cx="7" cy="4.500" r="3.500" fill="none" stroke="#666" strokeWidth="1.500" /><path d="M4.500 7.500L1 11" stroke="#666" strokeWidth="1.800" /></svg>
      </FindBox>
    </AddressRow>
    <Files>
      <FileTable>
        <thead>
          <tr>
            <HeadCell $w={258}><span>Nom<SortMark><svg width="9" height="5"><path d="M.5 4.500l4-4 4 4" fill="none" stroke="#555" /></svg></SortMark></span></HeadCell>
            <HeadCell $w={120}><span>Modifié le</span></HeadCell>
            <HeadCell $w={120}><span>Type</span></HeadCell>
            <HeadCell $w={80}><span>Taille</span></HeadCell>
          </tr>
        </thead>
        <tbody>
          <FileRow $on>
            <Cell><FileName><PageIcon />Tables.sql</FileName></Cell>
            <Cell>29/12/2015 11:56</Cell><Cell>Fichier SQL</Cell><Cell $right>3 Ko</Cell>
          </FileRow>
          <FileRow>
            <Cell><FileName><PageIcon />Tables.sql.meta</FileName></Cell>
            <Cell>29/12/2015 11:57</Cell><Cell>Fichier META</Cell><Cell $right>1 Ko</Cell>
          </FileRow>
        </tbody>
      </FileTable>
    </Files>
    <NavPane>
      <NavRows>
        <NavRow $in>
          <svg width="14" height="12"><rect x="1" y="2" width="12" height="9" fill="#4f87ad" /></svg>J_CCSA_X64FRE_FR-FR_DV5 (I:)
        </NavRow>
        <NavRow>
          <svg width="16" height="16" viewBox="0 0 16 16">
            <circle cx="11" cy="5.500" r="5" fill="#8cc8ea" /><path d="M9 1c4 2 5 6 3 9" stroke="#2f7fb5" fill="none" />
            <path d="M.5 6h10.500v7H.5z" fill="#4db0f0" stroke="#2b6a98" /><path d="M3 15h6" stroke="#4a88b0" strokeWidth="1.500" />
          </svg>
          Réseau
        </NavRow>
        <NavRow>
          <svg width="16" height="16"><circle cx="10" cy="6" r="3.500" fill="#2f7fb5" /></svg>Groupe résidentiel
        </NavRow>
      </NavRows>
      <ScrollTrack>
        <ScrollThumb />
        <svg width="9" height="7"><path d="M1 1l3.500 4L8 1" fill="none" stroke="#444" strokeWidth="2" /></svg>
      </ScrollTrack>
    </NavPane>
    <ExplorerStatus>
      <span>2 élément(s)</span>
      <Bar $h={12} $c="#e2e2e2" />
      <span>1 élément sélectionné&nbsp; 2,36 Ko</span>
      <Bar $h={12} $c="#e2e2e2" />
      <ViewButtons>
        <ViewButton $on aria-label="Détails">
          <svg width="16" height="14"><path d="M.5 1v12M.5 1.500h3v11h-3" stroke="#7d8b95" fill="none" /><path d="M6 3h4M11.500 3h4M6 7h4M11.500 7h4M6 11h4M11.500 11h4" stroke="#4a6474" strokeWidth="1.200" /></svg>
        </ViewButton>
        <ViewButton aria-label="Grandes icônes">
          <svg width="14" height="11"><rect x=".75" y=".75" width="12.500" height="9.500" fill="#fff" stroke="#5d6f7c" strokeWidth="1.300" /><path d="M3 3h5v5H3z" fill="#2f7fb5" /><path d="M6 3h6v2H6z" fill="#7a9cb0" /></svg>
        </ViewButton>
      </ViewButtons>
    </ExplorerStatus>
  </Explorer>
);

const SceneDrawing = () => (
  <svg width="202" height="418" viewBox="0 0 202 418">
    <g stroke="#5c5c5c" fill="none">
      {[262, 268, 275, 282, 290, 298, 309, 322, 357, 378, 403].map((y) => <path key={y} d={`M0 ${y}.5h202`} strokeOpacity="0.400" />)}
      <path d="M0 270l202 44M0 278l202 56M0 296l202 60M0 310l202 70M0 340l180 81M0 372l104 49M0 404l26 17M0 287l202 57M60 254l142 28M20 254l182 40" strokeOpacity="0.600" />
      <path d="M90 234l112 14M0 342.500h202" stroke="#606060" />
      <path d="M0 254.500h202M4 254l198 42" stroke="#6e6e6e" />
    </g>
    <path d="M146 29h10l-5 21z" fill="#97e23c" /><ellipse cx="151" cy="29" rx="5.500" ry="2.500" fill="#b2f268" />
    <path d="M121 45v12l22-6z" fill="#e6e6e6" />
    <path d="M181 45v12l-22-6z" fill="#e0381e" />
    <path d="M146 81h10l-5-22z" fill="#efefef" />
    <rect x="144" y="44" width="14" height="14" fill="#eee" />
    <g fill="#fff" fontFamily="DejaVu Sans" fontSize="11" fontWeight="700">
      <text x="147" y="18">y</text><text x="182" y="54">x</text>
    </g>
    <path d="M136 97l-9 3 9 3M127 100h9" fill="none" stroke="#b9b9b9" />
    <text x="140" y="104" fill="#c4c4c4" fontFamily="DejaVu Sans" fontSize="11">Persp</text>
  </svg>
);

export default function App() {
  return (
    <>
      <GlobalStyle />
      <Page>
        <TitleBar>
          <UnityLogo />
          <TitleText>Unity Personal (64bit) - 8 - Install database.unity - LoginAccountProSecure - PC, Mac &amp; Linux Standalone &lt;DX11&gt;</TitleText>
          <WindowButtons>
            <BareButton aria-label="Minimize"><WinMin c="#999" /></BareButton>
            <BareButton aria-label="Restore"><svg width="11" height="11"><path d="M.5 2.500h8v8h-8zM2.500 2.500v-2h8v8h-2" fill="none" stroke="#999" /></svg></BareButton>
            <BareButton aria-label="Close"><WinClose c="#999" /></BareButton>
          </WindowButtons>
        </TitleBar>
        <MenuBar>
          {["File", "Edit", "Assets", "GameObject", "Component", "Window", "Help"].map((m) => <BareButton key={m}>{m}</BareButton>)}
        </MenuBar>
        <Toolbar>
          <ToolbarSide>
            <Segmented $h={22}>
              <Segment $w={31} aria-label="Hand">
                <svg width="18" height="18" viewBox="0 0 18 18"><path d="M5 16c-1-3-3-4-4-6.500 1-1 2-.5 3.500 1.500L3.500 4.500c.5-1 1.500-1 2 0l1 4-.3-6c.5-1 1.700-1 2 0l.5 5.500 1-5.500c.5-1 1.700-.7 2 .3l-.5 6L13 5.500c.6-.7 1.700-.4 1.700.6 0 4-1 5-2.200 9.900z" fill="#f2f2f2" stroke="#222" strokeWidth="1.200" /></svg>
              </Segment>
              <Segment $w={32} $on aria-label="Move">
                <svg width="18" height="18" viewBox="0 0 18 18"><path d="M9 0l3.500 4H10v4h4V5.500L18 9l-4 3.500V10h-4v4h2.500L9 18l-3.500-4H8v-4H4v2.500L0 9l4-3.500V8h4V4H5.500z" fill="#fff" /></svg>
              </Segment>
              <Segment $w={32} aria-label="Rotate">
                <svg width="16" height="16" viewBox="0 0 16 16"><path d="M2.500 7A5.500 5 0 0 1 12 4.500M13.500 9A5.500 5 0 0 1 4 11.500" fill="none" stroke="#1c1c1c" strokeWidth="2.300" /><path d="M14.500 1v6h-6zM1.500 15V9h6z" fill="#1c1c1c" /></svg>
              </Segment>
              <Segment $w={32} aria-label="Scale">
                <svg width="18" height="16" viewBox="0 0 18 16"><rect x="6" y="5" width="6" height="6" fill="none" stroke="#1c1c1c" strokeWidth="2" /><path d="M1 0h5L1 5zM17 0v5l-5-5zM1 16v-5l5 5zM17 16h-5l5-5z" fill="#1c1c1c" /><path d="M2 1l4 4M16 1l-4 4M2 15l4-4M16 15l-4-4" stroke="#1c1c1c" strokeWidth="1.500" /></svg>
              </Segment>
              <Segment $w={31} aria-label="Rect">
                <svg width="18" height="16" viewBox="0 0 18 16"><rect x="2.500" y="2" width="13" height="12" fill="none" stroke="#1c1c1c" strokeWidth="1.600" /><circle cx="9" cy="8" r="2" fill="none" stroke="#1c1c1c" /><g fill="#1c1c1c"><circle cx="2.500" cy="2" r="2" /><circle cx="15.500" cy="2" r="2" /><circle cx="2.500" cy="14" r="2" /><circle cx="15.500" cy="14" r="2" /></g></svg>
              </Segment>
            </Segmented>
            <Segmented $h={18} $ml={21}>
              <Segment $w={63}>
                <svg width="12" height="10"><rect x="1" y="1.500" width="3" height="4" fill="#777" stroke="#444" /><rect x="6.500" y=".5" width="3.500" height="8" fill="#c8603f" stroke="#444" /></svg>Pivot
              </Segment>
              <Segment $w={62}>
                <svg width="12" height="12"><path d="M6 .5l5 2.500v5.500L6 11.500 1 8.500V3z" fill="#777" stroke="#444" /><path d="M1.500 3.500L6 6l4.500-2.500M6 6v5" stroke="#ddd" fill="none" /></svg>Local
              </Segment>
            </Segmented>
          </ToolbarSide>
          <Segmented $h={22}>
            <Segment $w={31} aria-label="Play"><svg width="15" height="13"><path d="M0 0l15 6.500L0 13z" fill="#1c1c1c" /></svg></Segment>
            <Segment $w={32} aria-label="Pause"><svg width="10" height="13"><path d="M0 0h3.500v13H0zM6.500 0H10v13H6.500z" fill="#1c1c1c" /></svg></Segment>
            <Segment $w={32} aria-label="Step"><svg width="16" height="13"><path d="M0 0l12 6.500L0 13zM12 0h3v13h-3z" fill="#1c1c1c" /></svg></Segment>
          </Segmented>
          <ToolbarSide $end>
            <CloudButton aria-label="Cloud"><svg width="16" height="11"><path d="M3.500 10h9a2.500 2.500 0 0 0 .5-5A4 4 0 0 0 5.500 4 3 3 0 0 0 3.500 10z" fill="none" stroke="#222" strokeWidth="1.300" /></svg></CloudButton>
            <Picker label="Account" w={80} ml={10} />
            <Picker label="Layers" w={80} ml={20} />
            <Picker label="Layout" w={80} ml={10} />
          </ToolbarSide>
        </Toolbar>
        <Dock>
          <Panel>
            <TabStrip>
              <Tab $active><FolderTabIcon />Project</Tab>
              <TabExtras><LockIcon /><PaneMenuIcon /></TabExtras>
            </TabStrip>
            <PanelToolbar>
              <FlatButton $w={56}>Create<Caret size={5} color="#555" /></FlatButton>
              <SearchField><SearchIcon /><SearchInput aria-label="Search project" /></SearchField>
              <FlatButton $w={21} aria-label="By type"><ShapesIcon /></FlatButton>
              <FlatButton $w={24} aria-label="By label"><TagIcon /></FlatButton>
            </PanelToolbar>
            <PanelBody>
              <ul>
                {project.map(([d, name, kind, open], i) => (
                  <TreeRow key={i} $depth={d} $selected={name === "Tables"}>
                    <ArrowSlot>{open !== undefined && <Triangle open={open} />}</ArrowSlot>
                    <IconSlot>{kind === "folder" || kind === "empty" ? <FolderIcon empty={kind === "empty"} /> : <SheetIcon kind={kind} />}</IconSlot>
                    {name}
                  </TreeRow>
                ))}
              </ul>
            </PanelBody>
          </Panel>
          <Panel>
            <TabStrip>
              <Tab $active><ListIcon />Hierarchy</Tab>
              <TabExtras><PaneMenuIcon /></TabExtras>
            </TabStrip>
            <PanelToolbar $pl={8}>
              <FlatButton $w={56}>Create<Caret size={5} color="#555" /></FlatButton>
              <SearchField><SearchIcon caret /><SearchInput placeholder="All" aria-label="Search hierarchy" /></SearchField>
            </PanelToolbar>
            <PanelBody>
              <ul>
                {hierarchy.map(([d, name, open], i) => (
                  <TreeRow key={i} $depth={d} $dim={i === 0}>
                    <ArrowSlot>{open !== undefined && <Triangle open={open} />}</ArrowSlot>
                    {name}
                  </TreeRow>
                ))}
              </ul>
            </PanelBody>
          </Panel>
          <Panel>
            <TabStrip>
              <Tab $active><InfoIcon />Inspector</Tab>
              <TabExtras><LockIcon /><PaneMenuIcon /></TabExtras>
            </TabStrip>
            <InspectorBody>
              <InspectorHead>
                <InspectorTitle><svg width="18" height="20"><path d="M.5.5h12l5 5V20H.5z" fill="#eceff0" stroke="#888" /></svg>Tables</InspectorTitle>
                <svg width="12" height="12"><circle cx="6" cy="6" r="3.500" fill="none" stroke="#555" strokeWidth="1.500" /><path d="M6 0v3M0 6h3M9 6h3M2 2l2 2M10 2L8 4" stroke="#555" strokeWidth="1.500" /></svg>
              </InspectorHead>
              <AssetLabels>
                <AssetHeader>Asset Labels</AssetHeader>
                <TagRow><TagButton aria-label="Labels"><TagIcon color="#fff" /></TagButton></TagRow>
                <BundleRow>
                  <BundleLabel>AssetBundle</BundleLabel>
                  <Picker label="None" w={124} look="dark" />
                  <Picker label="None" w={47} ml={7} look="dark" />
                </BundleRow>
              </AssetLabels>
            </InspectorBody>
          </Panel>
          <SceneStack>
            <Panel>
              <TabStrip>
                <Tab $active><HashIcon />Scene</Tab>
                <Tab><StoreIcon />Asset Store</Tab>
                <Tab><AnimatorIcon />Animator</Tab>
                <TabExtras><PaneMenuIcon /></TabExtras>
              </TabStrip>
              <SceneTools>
                <Picker label="Shaded" w={120} look="flat" />
                <Spacer $w={6} />
                <FlatButton $w={26}>2D</FlatButton>
                <FlatButton $w={31} aria-label="Lighting"><svg width="12" height="12"><circle cx="6" cy="6" r="2.500" fill="none" stroke="#444" /><path d="M6 0v2M6 10v2M0 6h2M10 6h2M2 2l1 1M10 2L9 3M2 10l1-1M10 10L9 9" stroke="#444" strokeWidth="1.200" /></svg></FlatButton>
                <FlatButton $w={26} aria-label="Audio"><svg width="14" height="10"><path d="M0 3h3l4-3v10L3 7H0z" fill="#666" /><path d="M9 2c1.500 2 1.500 4 0 6M11.500 1c2 2.500 2 5.500 0 8" fill="none" stroke="#666" /></svg></FlatButton>
                <FlatButton $w={37} aria-label="Effects"><svg width="12" height="9"><rect x=".5" y=".5" width="11" height="8" fill="#ddd" stroke="#333" /><path d="M1 8l3-4 3 3 2-1 2 2z" fill="#333" /></svg><Caret size={5} color="#555" /></FlatButton>
                <Spacer />
                <FlatButton $w={56}>Gizmos<Caret size={5} color="#555" /></FlatButton>
                <SearchField $w={205}><SearchIcon caret /><SearchInput placeholder="All" aria-label="Search scene" /></SearchField>
              </SceneTools>
              <SceneView><SceneDrawing /></SceneView>
            </Panel>
            <LowerDock>
              <GameView><NextButton>Next installation step</NextButton></GameView>
              <Panel>
                <TabStrip><TabExtras><PaneMenuIcon /></TabExtras></TabStrip>
                <ConsoleTools>
                  <FlatButton $w={68}>Error Pause</FlatButton>
                  <Spacer $w={28} />
                  <Counter><svg width="14" height="14"><circle cx="7" cy="7" r="6" fill="#fff" stroke="#999" strokeWidth="1.300" /><path d="M7 3v5M7 9.500v1.500" stroke="#666" strokeWidth="1.500" /></svg>0</Counter>
                  <Counter><svg width="14" height="14"><path d="M7 1l6 12H1z" fill="#ccc" stroke="#888" /><path d="M7 5v4M7 10v1.500" stroke="#777" strokeWidth="1.200" /></svg>0</Counter>
                  <Counter><svg width="14" height="14"><path d="M4 0h6l4 4v6l-4 4H4l-4-4V4z" fill="#4d5353" /><path d="M7 3v5M7 9.500v1.500" stroke="#ddd" strokeWidth="1.500" /></svg>0</Counter>
                </ConsoleTools>
                <ConsoleList />
                <ConsoleDetail />
              </Panel>
            </LowerDock>
          </SceneStack>
        </Dock>
        <StatusStrip />
        <ExplorerWindow />
        <Callout>Copy the path to this folder</Callout>
        <ContextMenu role="menu">
          <MenuItem disabled>Annuler</MenuItem>
          <MenuRule />
          <MenuItem>Couper</MenuItem>
          <MenuItem $on>Copier</MenuItem>
          <MenuItem>Coller</MenuItem>
          <MenuItem>Supprimer</MenuItem>
          <MenuRule />
          <MenuItem disabled>Tout sélectionner</MenuItem>
          <MenuRule />
          <MenuItem>Lecture de droite à gauche</MenuItem>
          <MenuItem>Afficher les caractères de contrôle Unicode</MenuItem>
          <MenuItem>Insérer un caractère de contrôle Unicode<svg width="5" height="8"><path d="M.5.5L4 4 .5 7.500" fill="none" stroke="#333" strokeWidth="1.200" /></svg></MenuItem>
          <MenuRule />
          <MenuItem>Ouvrir l'Éditeur IME</MenuItem>
          <MenuItem disabled>Reconversion</MenuItem>
        </ContextMenu>
        <Cursor width="13" height="19" viewBox="0 0 13 19">
          <path d="M.7 1v14.500l3.500-3.300 2.300 5.300 2.500-1-2.300-5.200h4.800z" fill="#fff" stroke="#222" />
        </Cursor>
      </Page>
    </>
  );
}
